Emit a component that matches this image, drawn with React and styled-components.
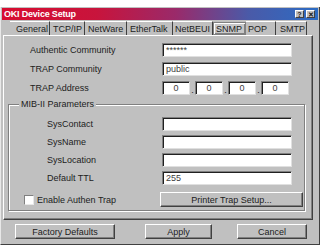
import styled, { createGlobalStyle } from 'styled-components';

const GlobalStyle = createGlobalStyle`
  html, body {
    margin: 0;
    padding: 0;
    background: #ffffff;
    overflow: hidden;
  }
  body {
    font-family: 'Liberation Sans', Arial, sans-serif;
    font-size: 9px;
    color: #1c1c1c;
  }
`;

const Page = styled.div`
  width: 320px;
  height: 245px;
  padding-top: 7px;
  box-sizing: border-box;
`;

const Window = styled.div`
  height: 238px;
  background: #c0c0c0;
  border-left: 1px solid #e8e8e8;
  border-right: 1px solid #404040;
  border-bottom: 1px solid #404040;
  box-sizing: border-box;
  display: flex;
  flex-direction: column;
  padding: 1px 1px 0 1px;
`;

const TitleBar = styled.div`
  height: 12px;
  display: flex;
  align-items: center;
  padding: 0 3px 0 2px;
  background: linear-gradient(to right, #d80c30 0%, #c8143c 30%, #9a2a6a 55%, #4a5aa8 78%, #2c6cc4 100%);
`;

const Title = styled.span`
  color: #fff;
  font-weight: bold;
  font-size: 9px;
  flex: 1;
  letter-spacing: -0.2px;
`;

const CaptionButton = styled.span`
  width: 9px;
  height: 8px;
  margin-left: 2px;
  background: #c0c0c0;
  border-top: 1px solid #fff;
  border-left: 1px solid #fff;
  border-right: 1px solid #404040;
  border-bottom: 1px solid #404040;
  box-sizing: border-box;
  display: flex;
  align-items: center;
  justify-content: center;
  font-size: 7px;
  font-weight: bold;
  line-height: 1;
`;

const TabRow = styled.div`
  height: 14px;
  margin-top: 1px;
  display: flex;
  padding-left: 8px;
`;

const Tab = styled.div`
  width: ${p => p.$w}px;
  box-sizing: border-box;
  padding-left: ${p => p.$pad || 3}px;
  display: flex;
  align-items: center;
  border-right: 1px solid #404040;
  border-top: 1px solid #fff;
  ${p => p.$active && `
    background: #c8c8c8;
    box-shadow: inset 1px 1px 0 #fff, inset -1px -1px 0 #808080;
    border: 1px solid #808080;
    margin-top: 1px;
  `}
`;

const Panel = styled.div`
  height: 185px;
  margin: 0 5px 0 1px;
  border-top: 1px solid #fff;
  border-left: 1px solid #fff;
  border-right: 1px solid #404040;
  border-bottom: 1px solid #404040;
  box-shadow: inset -1px -1px 0 #808080;
  box-sizing: border-box;
  padding-top: 7px;
  display: flex;
  flex-direction: column;
`;

const Row = styled.div`
  display: grid;
  grid-template-columns: ${p => p.$label}px 130px;
  align-items: center;
  height: 14px;
  margin-bottom: ${p => p.$gap ?? 5}px;
`;

const Label = styled.span`
  padding-left: ${p => p.$indent}px;
`;

const Field = styled.div`
  height: 14px;
  background: #fff;
  border-top: 1px solid #808080;
  border-left: 1px solid #808080;
  border-right: 1px solid #e0e0e0;
  border-bottom: 1px solid #e0e0e0;
  box-shadow: inset 1px 1px 0 #202020;
  box-sizing: border-box;
  padding: 0 3px;
  display: flex;
  align-items: center;
  justify-content: ${p => (p.$center ? 'center' : 'flex-start')};
  color: #404040;
`;

const IpRow = styled.div`
  display: flex;
  align-items: flex-end;
`;

const IpField = styled(Field)`
  width: 28px;
`;

const Dot = styled.span`
  width: 5px;
  text-align: center;
  line-height: 9px;
`;

const Group = styled.fieldset`
  margin: 4px 7px 0 4px;
  padding: 8px 0 0 10px;
  height: 112px;
  box-sizing: border-box;
  border: 1px solid #808080;
  box-shadow: 1px 1px 0 #fff, inset 1px 1px 0 #fff;
  min-width: 0;
`;

const Legend = styled.legend`
  padding: 0 2px;
  background: #c0c0c0;
  line-height: 10px;
`;

const CheckRow = styled.div`
  display: flex;
  align-items: center;
  margin-top: 7px;
`;

const CheckLabel = styled.label`
  width: 136px;
  display: flex;
  align-items: center;
  gap: 3px;
  padding-left: 5px;
`;

const CheckBox = styled.span`
  width: 8px;
  height: 8px;
  background: #fff;
  border-top: 1px solid #808080;
  border-left: 1px solid #808080;
  border-right: 1px solid #e8e8e8;
  border-bottom: 1px solid #e8e8e8;
`;

const Button = styled.div`
  width: ${p => p.$w}px;
  height: 15px;
  box-sizing: border-box;
  border-top: 1px solid #fff;
  border-left: 1px solid #fff;
  border-right: 1px solid #404040;
  border-bottom: 1px solid #404040;
  box-shadow: inset -1px -1px 0 #808080;
  display: flex;
  align-items: center;
  justify-content: center;
  color: #202020;
`;

const Footer = styled.div`
  display: flex;
  padding-top: 4px;
`;

const FooterSlot = styled.div`
  margin-left: ${p => p.$left}px;
`;

const tabs = [
  { name: 'General', w: 40, pad: 6 },
  { name: 'TCP/IP', w: 35 },
  { name: 'NetWare', w: 42 },
  { name: 'EtherTalk', w: 46 },
  { name: 'NetBEUI', w: 40, pad: 2 },
  { name: 'SNMP', w: 33, pad: 2, active: true },
  { name: 'POP', w: 30, pad: 2 },
  { name: 'SMTP', w: 31, pad: 4 },
];

const groupFields = [
  { label: 'SysContact', value: '' },
  { label: 'SysName', value: '' },
  { label: 'SysLocation', value: '' },
  { label: 'Default TTL', value: '255' },
];

export default function App() {
  return (
    <Page>
      <GlobalStyle />
      <Window>
        <TitleBar>
          <Title>OKI Device Setup</Title>
          <CaptionButton>?</CaptionButton>
          <CaptionButton>✕</CaptionButton>
        </TitleBar>
        <TabRow>
          {tabs.map(t => (
            <Tab key={t.name} $w={t.w} $pad={t.pad} $active={t.active}>
              {t.name}
            </Tab>
          ))}
        </TabRow>
        <Panel>
          <Row $label={158}>
            <Label $indent={26}>Authentic Community</Label>
            <Field>******</Field>
          </Row>
          <Row $label={158}>
            <Label $indent={26}>TRAP Community</Label>
            <Field>public</Field>
          </Row>
          <Row $label={158} $gap={0}>
            <Label $indent={26}>TRAP Address</Label>
            <IpRow>
              {[0, 1, 2, 3].map(i => (
                <IpRow key={i}>
                  {i > 0 && <Dot>.</Dot>}
                  <IpField $center>0</IpField>
                </IpRow>
              ))}
            </IpRow>
          </Row>
          <Group>
            <Legend>MIB-II Parameters</Legend>
            {groupFields.map(f => (
              <Row key={f.label} $label={143} $gap={4}>
                <Label $indent={28}>{f.label}</Label>
                <Field>{f.value}</Field>
              </Row>
            ))}
            <CheckRow>
              <CheckLabel>
                <CheckBox />
                Enable Authen Trap
              </CheckLabel>
              <Button $w={143}>Printer Trap Setup...</Button>
            </CheckRow>
          </Group>
        </Panel>
        <Footer>
          <FooterSlot $left={13}>
            <Button $w={100}>Factory Defaults</Button>
          </FooterSlot>
          <FooterSlot $left={30}>
            <Button $w={67}>Apply</Button>
          </FooterSlot>
          <FooterSlot $left={25}>
            <Button $w={70}>Cancel</Button>
          </FooterSlot>
        </Footer>
      </Window>
    </Page>
  );
}
